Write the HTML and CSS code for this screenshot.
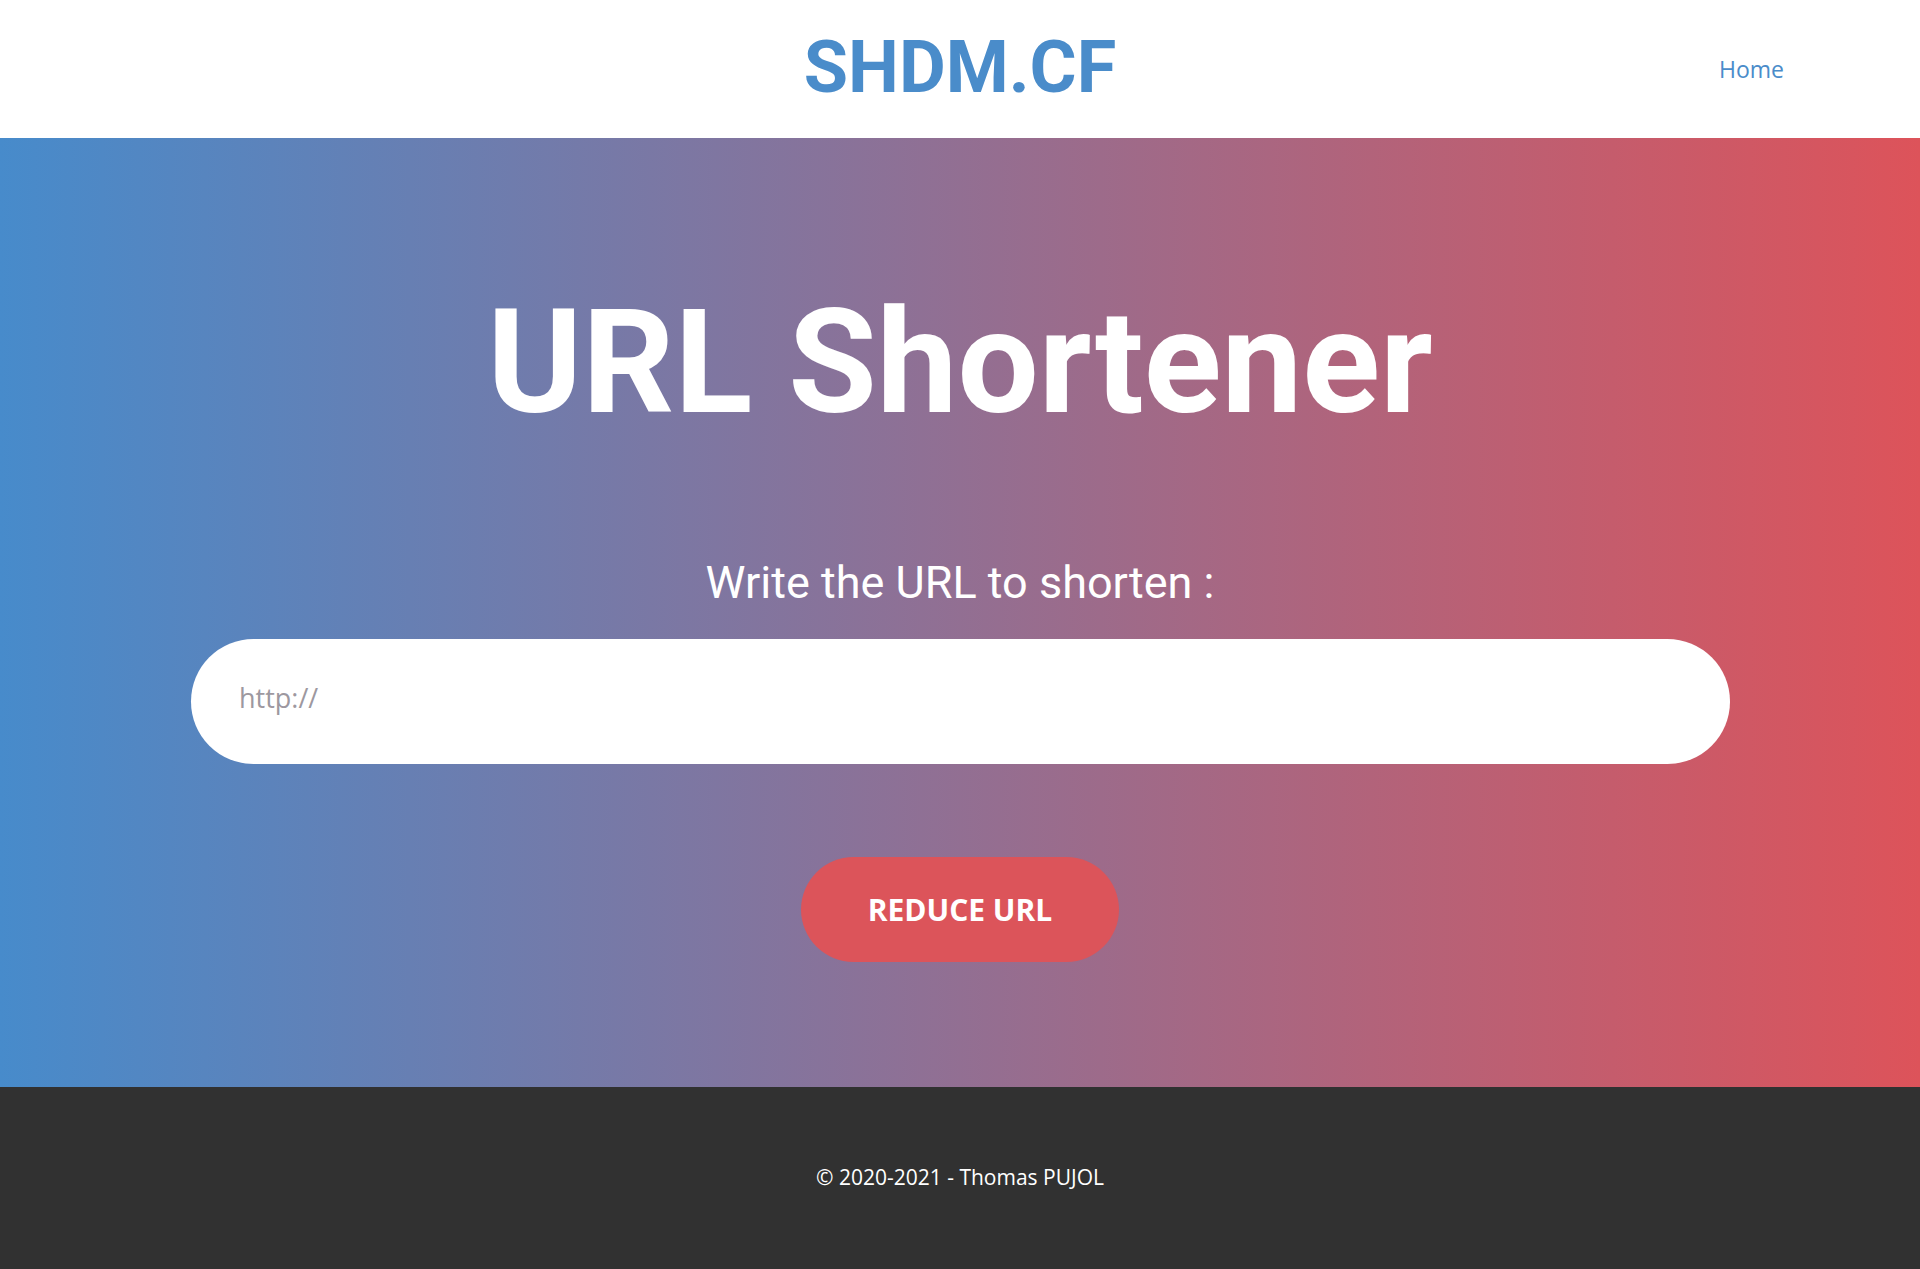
FILE: index.html
```html
<!DOCTYPE html>
<html lang="en">
<head>
<meta charset="utf-8">
<title>SHDM.CF - URL Shortener</title>
<link rel="stylesheet" href="styles.css">
</head>
<body>
<header class="header">
  <div class="header-side"></div>
  <a class="logo" href="#">SHDM.CF</a>
  <nav class="nav"><a class="nav-link" href="#">Home</a></nav>
</header>
<main class="hero">
  <h1 class="title">URL Shortener</h1>
  <form class="form" onsubmit="return false">
    <label class="label" for="url">Write the URL to shorten :</label>
    <input class="input" id="url" type="text" placeholder="http://">
    <button class="button" type="submit">REDUCE URL</button>
  </form>
</main>
<footer class="footer">
  <p class="copyright">© 2020-2021 - Thomas PUJOL</p>
</footer>
</body>
</html>
```

FILE: styles.css
```css
* { box-sizing: border-box; }
html, body { margin: 0; padding: 0; }
body {
  font-family: "Open Sans", "Liberation Sans", sans-serif;
  background: #ffffff;
}
.header {
  height: 138px;
  display: grid;
  grid-template-columns: 1fr auto 1fr;
  align-items: center;
  background: #ffffff;
}
.logo {
  font-family: Roboto, "Liberation Sans", sans-serif;
  font-weight: 700;
  font-size: 72px;
  line-height: 1;
  color: #4a8cca;
  text-decoration: none;
  margin-top: -3px;
}
.nav {
  justify-self: end;
  padding-right: 136px;
}
.nav-link {
  font-size: 23px;
  color: #4a8cca;
  text-decoration: none;
}
.hero {
  background: linear-gradient(90deg, #478bcb 0%, #dd535a 100%);
  padding: 153px 0 125px;
  display: flex;
  flex-direction: column;
  align-items: center;
}
.title {
  font-family: Roboto, "Liberation Sans", sans-serif;
  font-weight: 700;
  font-size: 144px;
  line-height: 1;
  color: #ffffff;
  margin: 0 0 125px;
}
.form {
  display: flex;
  flex-direction: column;
  align-items: center;
  width: 100%;
}
.label {
  font-family: Roboto, "Liberation Sans", sans-serif;
  font-weight: 400;
  font-size: 45px;
  line-height: 1;
  color: #ffffff;
  margin-bottom: 34px;
}
.input {
  width: 1539px;
  height: 125px;
  margin-left: 1px;
  border: none;
  border-radius: 63px;
  background: #ffffff;
  padding: 0 48px 8px;
  font-family: "Open Sans", "Liberation Sans", sans-serif;
  font-size: 27px;
  color: #333;
  outline: none;
}
.input::placeholder {
  color: #9d98a0;
}
.button {
  margin-top: 93px;
  width: 318px;
  height: 105px;
  border: none;
  border-radius: 53px;
  background: #dc545a;
  color: #ffffff;
  font-family: "Open Sans", "Liberation Sans", sans-serif;
  font-weight: 700;
  font-size: 30px;
  cursor: pointer;
}
.footer {
  background: #313131;
  height: 182px;
  display: flex;
  align-items: center;
  justify-content: center;
}
.copyright {
  margin: 0;
  color: #ffffff;
  font-size: 21px;
  padding-bottom: 2px;
}
```
